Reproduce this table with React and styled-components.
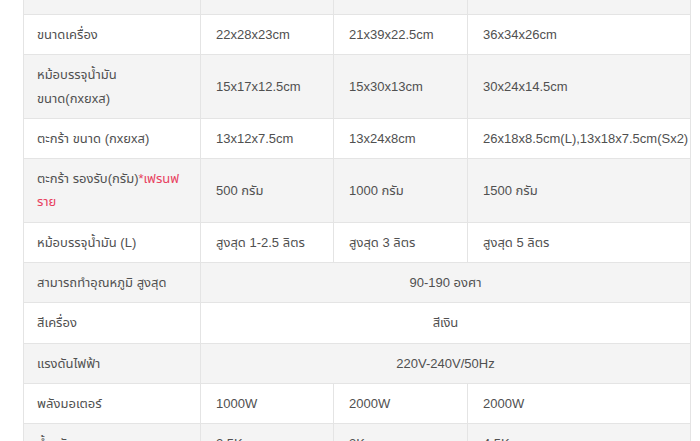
import React from "react";
import styled, { createGlobalStyle } from "styled-components";

const Global = createGlobalStyle`
  html, body {
    margin: 0;
    padding: 0;
    background: #ffffff;
    overflow: hidden;
  }
  body {
    font-family: "Liberation Sans", "Noto Sans Thai", "Noto Sans", sans-serif;
  }
`;

const Page = styled.div`
  width: 700px;
  height: 441px;
  overflow: hidden;
  background: #ffffff;
`;

const Table = styled.table`
  margin: -26.3px 0 0 23px;
  width: 667px;
  border-collapse: collapse;
  table-layout: fixed;
`;

const Col = styled.col`
  width: ${(p) => p.$w}px;
`;

const Row = styled.tr`
  background: #ffffff;
  &:nth-child(odd) {
    background: #f4f4f4;
  }
`;

const Cell = styled.td`
  border: 1px solid #e4e4e4;
  padding: 8px 15px;
  padding-left: ${(p) => (p.$label ? "13px" : "15px")};
  font-size: 13px;
  line-height: 23.3px;
  color: #505050;
  text-align: ${(p) => (p.$center ? "center" : "left")};
  vertical-align: middle;
  white-space: ${(p) => (p.$nowrap ? "nowrap" : "normal")};
`;

const Note = styled.span`
  color: #e8405e;
`;

const rows = [
  { label: "", values: ["", "", ""] },
  { label: "ขนาดเครื่อง", values: ["22x28x23cm", "21x39x22.5cm", "36x34x26cm"] },
  {
    label: (
      <>
        หม้อบรรจุน้ำมัน
        <br />
        ขนาด(กxยxส)
      </>
    ),
    values: ["15x17x12.5cm", "15x30x13cm", "30x24x14.5cm"],
  },
  {
    label: "ตะกร้า ขนาด (กxยxส)",
    values: ["13x12x7.5cm", "13x24x8cm", "26x18x8.5cm(L),13x18x7.5cm(Sx2)"],
  },
  {
    label: (
      <>
        ตะกร้า รองรับ(กรัม)<Note>*เฟรนฟ
        <br />
        ราย</Note>
      </>
    ),
    values: ["500 กรัม", "1000 กรัม", "1500 กรัม"],
  },
  {
    label: "หม้อบรรจุน้ำมัน (L)",
    values: ["สูงสุด 1-2.5 ลิตร", "สูงสุด 3 ลิตร", "สูงสุด 5 ลิตร"],
  },
  { label: "สามารถทำอุณหภูมิ สูงสุด", span: "90-190 องศา" },
  { label: "สีเครื่อง", span: "สีเงิน" },
  { label: "แรงดันไฟฟ้า", span: "220V-240V/50Hz" },
  { label: "พลังมอเตอร์", values: ["1000W", "2000W", "2000W"] },
  { label: "น้ำหนัก", values: ["2.5Kg", "3Kg", "4.5Kg"] },
];

const widths = [177, 133, 134, 223];

export default function App() {
  return (
    <Page>
      <Global />
      <Table>
        <colgroup>
          {widths.map((w, i) => (
            <Col key={i} $w={w} />
          ))}
        </colgroup>
        <tbody>
          {rows.map((r, i) => (
            <Row key={i}>
              <Cell $label>{r.label || "\u00a0"}</Cell>
              {r.span ? (
                <Cell colSpan={3} $center>
                  {r.span}
                </Cell>
              ) : (
                r.values.map((v, j) => (
                  <Cell key={j} $nowrap={j === 2}>
                    {v || "\u00a0"}
                  </Cell>
                ))
              )}
            </Row>
          ))}
        </tbody>
      </Table>
    </Page>
  );
}
